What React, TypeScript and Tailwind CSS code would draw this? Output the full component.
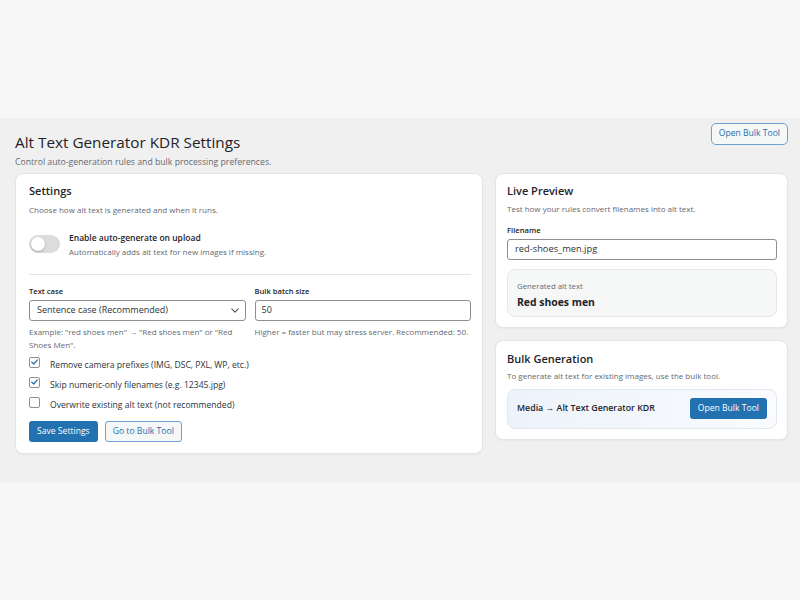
import React from 'react'

type Option = {
    label: string
    checked: boolean
}

const options: Option[] = [
    { label: 'Remove camera prefixes (IMG, DSC, PXL, WP, etc.)', checked: true },
    { label: 'Skip numeric-only filenames (e.g. 12345.jpg)', checked: true },
    { label: 'Overwrite existing alt text (not recommended)', checked: false },
]

const Checkbox = ({ checked }: { checked: boolean }) => (
    <span className="mt-[2px] flex h-[11px] w-[11px] shrink-0 items-center justify-center rounded-[2px] border border-[#8c8f94] bg-white">
        {checked && (
            <svg viewBox="0 0 12 12" className="h-[10px] w-[10px]">
                <path d="M2.4 6.3 5 8.7 9.8 3.2" fill="none" stroke="#2271b1" strokeWidth="1.7" strokeLinecap="round" strokeLinejoin="round" />
            </svg>
        )}
    </span>
)

const Toggle = () => (
    <span className="relative mt-[4px] block h-[18px] w-[31px] shrink-0 rounded-full bg-[#dcdcde]">
        <span className="absolute left-[2px] top-[2px] h-[14px] w-[14px] rounded-full bg-white shadow-[0_1px_2px_rgba(0,0,0,0.25)]" />
    </span>
)

const SettingsCard = () => (
    <div className="rounded-[8px] border border-[#e4e4e7] bg-white pb-[11px] pl-[13px] pr-[11px] pt-[9px] shadow-[0_1px_2px_rgba(0,0,0,0.04)]">
        <h2 className="text-[11px] font-semibold leading-[16px] text-[#1d2327]">Settings</h2>
        <p className="mt-[4px] text-[8px] leading-[14px] text-[#646970]">Choose how alt text is generated and when it runs.</p>

        <div className="mt-[14px] flex items-start gap-[9px]">
            <Toggle />
            <div>
                <div className="text-[8.5px] font-semibold leading-[14px] text-[#1d2327]">Enable auto-generate on upload</div>
                <div className="text-[8px] leading-[14px] text-[#646970]">Automatically adds alt text for new images if missing.</div>
            </div>
        </div>

        <div className="mt-[15px] border-t border-[#e5e5e5]" />

        <div className="mt-[10px] grid grid-cols-2 gap-x-[9px]">
            <div>
                <label className="block text-[7.6px] font-semibold leading-[12px] text-[#1d2327]">Text case</label>
                <div className="mt-[3px] flex h-[21px] items-center justify-between rounded-[3px] border border-[#8c8f94] bg-white pl-[7px] pr-[6px]">
                    <span className="text-[9px] text-[#2c3338]">Sentence case (Recommended)</span>
                    <svg viewBox="0 0 10 6" className="h-[5px] w-[8px]">
                        <path d="M1 1l4 4 4-4" fill="none" stroke="#50575e" strokeWidth="1.4" strokeLinecap="round" strokeLinejoin="round" />
                    </svg>
                </div>
                <p className="mt-[4px] text-[8px] leading-[13.5px] text-[#646970]">
                    Example: "red shoes men" → "Red shoes men" or "Red Shoes Men".
                </p>
            </div>
            <div>
                <label className="block text-[7.6px] font-semibold leading-[12px] text-[#1d2327]">Bulk batch size</label>
                <div className="mt-[3px] flex h-[21px] items-center rounded-[3px] border border-[#8c8f94] bg-white pl-[6px]">
                    <span className="text-[9px] text-[#2c3338]">50</span>
                </div>
                <p className="mt-[4px] text-[8px] leading-[13.5px] text-[#646970]">
                    Higher = faster but may stress server. Recommended: 50.
                </p>
            </div>
        </div>

        <div className="mt-[3px]">
            {options.map((opt) => (
                <div key={opt.label} className="flex h-[20px] items-start gap-[10px]">
                    <Checkbox checked={opt.checked} />
                    <span className="text-[8.6px] leading-[20px] text-[#2c3338]">{opt.label}</span>
                </div>
            ))}
        </div>

        <div className="mt-[6px] flex gap-[7px]">
            <button className="h-[21px] rounded-[3px] bg-[#2271b1] px-[8px] text-[8.6px] text-white">Save Settings</button>
            <button className="h-[21px] rounded-[3px] border border-[#6fa0cf] bg-[#f6f7f7] px-[7px] text-[8.6px] text-[#2271b1]">Go to Bulk Tool</button>
        </div>
    </div>
)

const LivePreview = () => (
    <div className="rounded-[8px] border border-[#e4e4e7] bg-white pb-[10px] pl-[11px] pr-[10px] pt-[9px] shadow-[0_1px_2px_rgba(0,0,0,0.04)]">
        <h2 className="text-[11px] font-semibold leading-[16px] text-[#1d2327]">Live Preview</h2>
        <p className="mt-[3px] text-[8px] leading-[14px] text-[#646970]">Test how your rules convert filenames into alt text.</p>
        <label className="mt-[8px] block text-[7.6px] font-semibold leading-[12px] text-[#1d2327]">Filename</label>
        <div className="mt-[3px] flex h-[21px] items-center rounded-[3px] border border-[#8c8f94] bg-white pl-[7px]">
            <span className="text-[9.3px] text-[#2c3338]">red-shoes_men.jpg</span>
        </div>
        <div className="mt-[9px] h-[48px] rounded-[8px] border border-[#e6e7e9] bg-[#f6f7f7] pl-[9px] pt-[10px]">
            <div className="text-[7.8px] leading-[12px] text-[#646970]">Generated alt text</div>
            <div className="mt-[3px] text-[10.4px] font-bold leading-[14px] text-[#1d2327]">Red shoes men</div>
        </div>
    </div>
)

const BulkGeneration = () => (
    <div className="rounded-[8px] border border-[#e4e4e7] bg-white pb-[10px] pl-[11px] pr-[10px] pt-[10px] shadow-[0_1px_2px_rgba(0,0,0,0.04)]">
        <h2 className="text-[11px] font-semibold leading-[16px] text-[#1d2327]">Bulk Generation</h2>
        <p className="mt-[2px] text-[8px] leading-[14px] text-[#646970]">To generate alt text for existing images, use the bulk tool.</p>
        <div className="mt-[6px] flex h-[40px] items-center justify-between rounded-[8px] border border-[#e3e8ef] bg-gradient-to-r from-[#edf3fb] to-[#f9fbfd] pl-[9px] pr-[9px]">
            <span className="text-[8.8px] font-semibold text-[#1d2327]">Media → Alt Text Generator KDR</span>
            <button className="h-[21px] rounded-[3px] bg-[#2271b1] px-[8px] text-[8.6px] text-white">Open Bulk Tool</button>
        </div>
    </div>
)

export default function App() {
    return (
        <div className="flex min-h-screen flex-col justify-center bg-[#f7f7f7] font-['Open_Sans',sans-serif]">
            <div className="bg-[#f0f0f1] pb-[29px] pl-[15px] pr-[12px] pt-[5px]">
                <div className="flex items-start justify-between">
                    <div className="pt-[7px]">
                        <h1 className="text-[15.3px] leading-[24px] text-[#1d2327]">Alt Text Generator KDR Settings</h1>
                        <p className="text-[8.7px] leading-[16px] text-[#646970]">Control auto-generation rules and bulk processing preferences.</p>
                    </div>
                    <button className="h-[22px] rounded-[5px] border border-[#6fa0cf] bg-[#f6f7f7] px-[7px] text-[8.6px] text-[#2271b1]">Open Bulk Tool</button>
                </div>

                <div className="mt-[3px] grid grid-cols-[468px_1fr] items-start gap-[12px]">
                    <SettingsCard />
                    <div className="flex flex-col gap-[12px]">
                        <LivePreview />
                        <BulkGeneration />
                    </div>
                </div>
            </div>
        </div>
    )
}
